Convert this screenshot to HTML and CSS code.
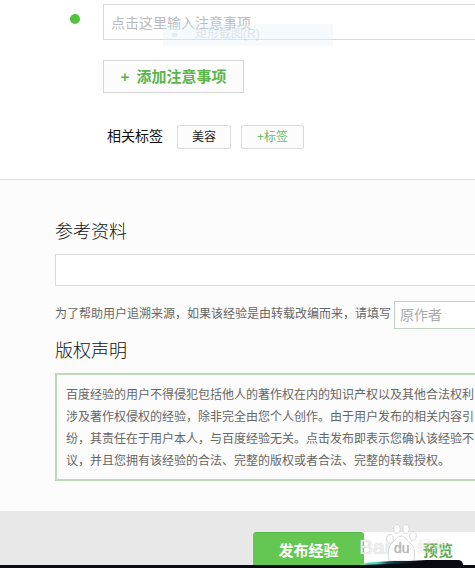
FILE: index.html
```html
<!DOCTYPE html>
<html lang="zh-CN">

<head>
    <meta charset="UTF-8">
    <title>发布经验</title>
    <link rel="stylesheet" href="styles.css">
</head>

<body>
    <div class="editor">
        <div class="notice-row">
            <span class="dot"></span>
            <div class="notice-input">点击这里输入注意事项</div>
            <div class="drag-ghost"><i></i>矩形截图(R)</div>
        </div>
        <button class="add-btn"><b>+</b>添加注意事项</button>
        <div class="tags">
            <span class="tags-label">相关标签</span>
            <span class="tag">美容</span>
            <span class="tag tag-add">+标签</span>
        </div>
    </div>

    <div class="info">
        <h2>参考资料</h2>
        <div class="ref-input"></div>
        <div class="source">
            <span>为了帮助用户追溯来源，如果该经验是由转载改编而来，请填写</span>
            <div class="author-input">原作者</div>
        </div>
        <h2>版权声明</h2>
        <div class="copyright">
            百度经验的用户不得侵犯包括他人的著作权在内的知识产权以及其他合法权利<br>
            涉及著作权侵权的经验，除非完全由您个人创作。由于用户发布的相关内容引<br>
            纷，其责任在于用户本人，与百度经验无关。点击发布即表示您确认该经验不<br>
            议，并且您拥有该经验的合法、完整的版权或者合法、完整的转载授权。
        </div>
    </div>

    <div class="footer">
        <button class="publish">发布经验</button>
        <button class="preview">预览</button>
        <div class="watermark">
            <span>Bai</span>
            <svg width="34" height="38" viewBox="0 0 34 38">
                <g fill="#fff" stroke="#d8d8d8" stroke-width="1">
                    <ellipse cx="5" cy="15" rx="3.3" ry="4.3"/>
                    <ellipse cx="12" cy="5" rx="3.2" ry="4.3"/>
                    <ellipse cx="21" cy="5" rx="3.2" ry="4.3"/>
                    <ellipse cx="28" cy="12" rx="3.3" ry="4.3"/>
                    <path d="M16 12C12 12 10 17 6 20C3 23 3 28 4 37H29C30 28 30 23 26 20C22 17 20 12 16 12Z"/>
                </g>
                <text x="9" y="29">du</text>
            </svg>
            <span class="faint">经验</span>
        </div>
        <svg class="edge" width="475" height="8" viewBox="0 0 475 8">
            <defs>
                <linearGradient id="glow">
                    <stop offset="0" stop-color="#70dda0"/>
                    <stop offset=".3" stop-color="#50d7c2"/>
                    <stop offset=".5" stop-color="#164856"/>
                    <stop offset="1" stop-color="#080c12"/>
                </linearGradient>
            </defs>
            <path d="M0 5H475V8H0Z" fill="#080d14"/>
            <path d="M360 6C368 3 379 3 394 2L426 0H459Q463 1 463 5V8H360Z" fill="#080c12"/>
            <path d="M360 5C368 1 379 2 394 1L416 1V3L390 4Z" fill="url(#glow)"/>
        </svg>
    </div>
</body>

</html>
```
FILE: styles.css
```css
* {
    box-sizing: border-box;
}

body {
    margin: 0;
    width: 475px;
    height: 568px;
    overflow: hidden;
    background: #fff;
    color: #666;
    font-family: "Liberation Sans", "Noto Sans CJK SC", sans-serif;
    font-size: 12px;
}

button {
    font-family: inherit;
    padding: 0;
}

.editor {
    height: 180px;
    padding: 4px 0 0 70px;
    border-bottom: 1px solid #dcdcdc;
}

.notice-row {
    display: flex;
    align-items: center;
    height: 36px;
    position: relative;
}

.dot {
    width: 10px;
    height: 10px;
    margin: -6px 23px 0 0;
    border-radius: 50%;
    background: #50c23c;
}

.notice-input {
    flex: 1;
    height: 36px;
    padding-left: 7px;
    border: 1px solid #d9d9d9;
    border-right: 0;
    color: #bbb;
    font-size: 14px;
    line-height: 36px;
}

.drag-ghost {
    position: absolute;
    left: 93px;
    top: 20px;
    width: 170px;
    height: 22px;
    padding-left: 32px;
    background: rgba(225, 242, 252, 0.36);
    color: rgba(140, 150, 160, 0.25);
    line-height: 21px;
}

.drag-ghost i {
    position: absolute;
    left: 9px;
    top: 9px;
    width: 5px;
    height: 4px;
    background: rgba(150, 180, 210, 0.2);
}

.add-btn {
    display: block;
    width: 141px;
    height: 33px;
    margin: 20px 0 0 33px;
    border: 1px solid #d5d5d5;
    background: #fcfcfc;
    color: #5cb54b;
    font-size: 15px;
    font-weight: bold;
    line-height: 32px;
}

.add-btn b {
    margin-right: 7px;
}

.tags {
    display: flex;
    align-items: center;
    height: 24px;
    margin: 32px 0 0 37px;
}

.tags-label {
    width: 70px;
    color: #111;
    font-size: 14px;
    line-height: 20px;
    padding-bottom: 3px;
}

.tag {
    width: 54px;
    height: 24px;
    margin-right: 10px;
    border: 1px solid #dcdcdc;
    border-radius: 2px;
    background: #fcfcfc;
    color: #222;
    line-height: 22px;
    text-align: center;
}

.tag-add {
    width: 63px;
    color: #6fbd62;
}

.info {
    height: 331px;
    padding: 40px 0 0 55px;
    background: #fcfcfc;
}

h2 {
    height: 24px;
    margin: 0;
    color: #111;
    font-size: 18px;
    font-weight: 300;
    line-height: 24px;
}

.ref-input {
    height: 32px;
    margin-top: 10px;
    border: 1px solid #dcdcdc;
    border-right: 0;
    background: #fff;
}

.source {
    display: flex;
    align-items: center;
    height: 28px;
    margin: 15px 0 10px;
    white-space: nowrap;
}

.source span {
    width: 339px;
    height: 24px;
    line-height: 22px;
}

.author-input {
    flex: 1;
    height: 28px;
    padding-left: 5px;
    border: 1px solid #bcd4bf;
    border-right: 0;
    background: #fff;
    color: #aaa;
    font-size: 14px;
    line-height: 26px;
}

.copyright {
    height: 108px;
    margin-top: 10px;
    padding: 9px 0 0 9px;
    border: 2px solid #bfdab9;
    border-right: 0;
    line-height: 22px;
    white-space: nowrap;
    overflow: hidden;
}

.footer {
    display: flex;
    position: relative;
    height: 57px;
    padding: 21px 0 0 253px;
    background: #e8e8e8;
}

.publish,
.preview {
    width: 111px;
    height: 36px;
    border: 0;
    font-size: 15px;
    font-weight: bold;
    line-height: 33px;
}

.publish {
    border-top: 1px solid #51b843;
    border-radius: 4px 4px 0 0;
    background: #63c752;
    color: #fff;
}

.preview {
    padding-left: 37px;
    background: #fff;
    color: #5aab4b;
}

.watermark {
    display: flex;
    align-items: flex-end;
    position: absolute;
    left: 359px;
    top: 13px;
    height: 38px;
    color: rgba(255, 255, 255, 0.8);
    font-size: 21px;
    line-height: 31px;
    text-shadow: 0 0 1px #aaa;
}

.watermark svg {
    margin-left: -4px;
}

.watermark text {
    fill: #bbb;
    font-size: 14px;
}

.watermark .faint {
    margin-left: -2px;
    font-size: 15px;
    opacity: 0.5;
}

.edge {
    position: absolute;
    left: 0;
    bottom: 0;
}
```
